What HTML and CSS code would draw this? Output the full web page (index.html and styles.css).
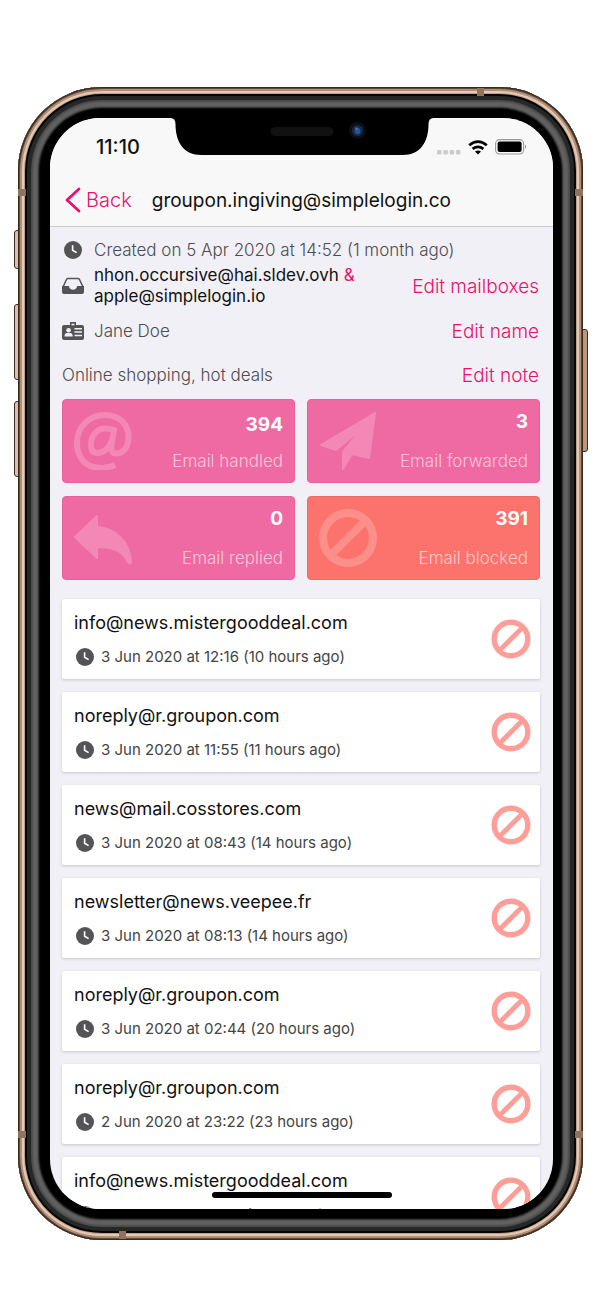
FILE: index.html
```html
<!DOCTYPE html>
<html lang="en">
<head>
<meta charset="utf-8">
<meta name="viewport" content="width=device-width, initial-scale=1">
<title>Alias activity</title>
<link rel="stylesheet" href="styles.css">
</head>
<body>
<svg class="sprite" aria-hidden="true">
  <symbol id="clock" viewBox="0 0 18 18"><circle cx="9" cy="9" r="9" fill="#545456"/><path d="M8.6 4.3V9.2L12.6 11.6" fill="none" stroke="#fff" stroke-width="1.6"/></symbol>
  <symbol id="ban" viewBox="0 0 40 40"><circle cx="20" cy="20" r="16.8" fill="none" stroke="currentColor" stroke-width="5.4"/><path d="M8.5 31.5L31.5 8.5" stroke="currentColor" stroke-width="4.8"/></symbol>
</svg>
<main class="phone">
  <span class="key key-mute"></span><span class="key key-up"></span><span class="key key-down"></span><span class="key key-power"></span>
  <span class="band band-tl"></span><span class="band band-tr"></span><span class="band band-bl"></span><span class="band band-br"></span><span class="band band-top"></span><span class="band band-bottom"></span>
  <div class="screen">
    <svg class="notch" viewBox="0 0 263 37" aria-hidden="true">
      <path d="M0 0Q5 0 5 6C5 24 13 37 31 37H232C250 37 258 24 258 6Q258 0 263 0Z" fill="#000"/>
      <rect x="100" y="9" width="63" height="9" rx="4.500" fill="#111"/>
      <circle cx="187" cy="12.500" r="8.500" fill="#0d0f12"/><circle cx="187" cy="12.500" r="5.500" fill="#17294a"/><circle cx="187" cy="13" r="3" fill="#2456a0"/><circle cx="186" cy="10.500" r="1.300" fill="#456fae"/>
    </svg>
    <header class="top">
      <div class="status">
        <time class="clock-time">11:10</time>
        <div class="signals">
          <svg width="24" height="6" viewBox="0 0 24 6" fill="#ccc" aria-hidden="true"><rect x="0" y="1" width="4.500" height="4.500" rx="1.200"/><rect x="6.300" y="1" width="4.500" height="4.500" rx="1.200"/><rect x="12.600" y="1" width="4.500" height="4.500" rx="1.200"/><rect x="18.900" y="1" width="4.500" height="4.500" rx="1.200"/></svg>
          <svg width="20" height="15" viewBox="0 0 20 15" fill="none" stroke="#000" stroke-width="2.700" aria-hidden="true"><path d="M1.200 5.200Q10 -1.900 18.800 5.200M4.600 8.900Q10 4.700 15.400 8.900"/><path d="M7 11.600Q10 9.400 13 11.600L10 14.600Z" fill="#000" stroke="none"/></svg>
          <svg width="32" height="16" viewBox="0 0 32 16" aria-hidden="true"><rect x=".6" y=".6" width="28" height="14.400" rx="4" fill="none" stroke="#999" stroke-width="1.100"/><rect x="2.600" y="2.600" width="24" height="10.400" rx="2" fill="#000"/><path d="M30 5.500Q32 7.800 30 10Z" fill="#888"/></svg>
        </div>
      </div>
      <nav class="nav">
        <button class="back" type="button"><svg width="16" height="26" viewBox="0 0 16 26" fill="none" stroke="currentColor" stroke-width="2.800" stroke-linecap="round" stroke-linejoin="round" aria-hidden="true"><path d="M14 2L2 13L14 24"/></svg>Back</button>
        <h1 class="title">groupon.ingiving@simplelogin.co</h1>
      </nav>
    </header>
    <section class="info">
      <div class="row row-created"><svg class="row-icon" viewBox="0 0 22 18" aria-hidden="true"><use href="#clock" x="2" width="18" height="18"/></svg><span>Created on 5 Apr 2020 at 14:52 (1 month ago)</span></div>
      <div class="row row-mail"><svg class="row-icon" viewBox="0 0 22 18" aria-hidden="true"><path d="M1 10L4.500 2.500Q5 1.500 6 1.500H16Q17 1.500 17.500 2.500L21 10" fill="none" stroke="#545456" stroke-width="1.500"/><path d="M0 9H7C7 14 15 14 15 9H22V15Q22 17 20 17H2Q0 17 0 15Z" fill="#545456"/></svg><span class="mailboxes">nhon.occursive@hai.sldev.ovh <span class="amp">&amp;</span><br>apple@simplelogin.io</span><button class="edit" type="button">Edit mailboxes</button></div>
      <div class="row row-name"><svg class="row-icon" viewBox="0 0 22 18" aria-hidden="true"><path d="M8 3V0H14V3H20Q22 3 22 5V16Q22 18 20 18H2Q0 18 0 16V5Q0 3 2 3Z" fill="#545456"/><path d="M9.500 1.700H12.500V3.300H9.500Z" fill="#f1f0f6"/><circle cx="6.600" cy="8.200" r="2.300" fill="#f1f0f6"/><path d="M2.500 14.500Q2.500 11 5 11H8.200Q10.700 11 10.700 14.500ZM12.500 6H20V7.500H12.500ZM12.500 9.300H20V10.800H12.500ZM12.500 12.800H20V14.300H12.500Z" fill="#f1f0f6"/></svg><span>Jane Doe</span><button class="edit" type="button">Edit name</button></div>
      <div class="row row-note"><span>Online shopping, hot deals</span><button class="edit" type="button">Edit note</button></div>
    </section>
    <section class="stats">
      <div class="stat stat-handled"><svg class="stat-icon" viewBox="0 0 58 58" fill="none" stroke="currentColor" stroke-width="6" aria-hidden="true"><path d="M41 53C37 55 33 56 28 56C12 56 3 46 3 31C3 15 15 3 31 3C45 3 54.500 12 54.500 25C54.500 35 49 41.500 43 41.500C38 41.500 36.500 38 37.500 33L40 18C37 17 34 16.500 31 16.500C22 16.500 17 25 17 33C17 38 19 41 23 41C30 41 36 35 37.500 29"/></svg><strong>394</strong><span>Email handled</span></div>
      <div class="stat"><svg class="stat-icon" viewBox="0 0 58 58" fill="currentColor" stroke="currentColor" stroke-width="2" stroke-linejoin="round" aria-hidden="true"><path d="M2 33L56 1L50 46L33 42L24 57V40L42 17L17 38Z"/></svg><strong>3</strong><span>Email forwarded</span></div>
      <div class="stat"><svg class="stat-icon" viewBox="0 0 58 58" fill="currentColor" stroke="currentColor" stroke-width="2" stroke-linejoin="round" aria-hidden="true"><path d="M1 28L23 7V18C42 19 56 33 57 53Q56 56 54 53C48 41 39 38 23 38V49Z"/></svg><strong>0</strong><span>Email replied</span></div>
      <div class="stat stat-blocked"><svg class="stat-icon" viewBox="0 0 58 58" fill="none" stroke="currentColor" aria-hidden="true"><circle cx="29" cy="29" r="25" stroke-width="8"/><path d="M12 46L46 12" stroke-width="8"/></svg><strong>391</strong><span>Email blocked</span></div>
    </section>
    <ul class="list">
      <li class="card"><div><h2>info@news.mistergooddeal.com</h2><p><svg width="18" height="18" aria-hidden="true"><use href="#clock"/></svg>3 Jun 2020 at 12:16 (10 hours ago)</p></div><button class="block" type="button" aria-label="Block"><svg width="40" height="40"><use href="#ban"/></svg></button></li>
      <li class="card"><div><h2>noreply@r.groupon.com</h2><p><svg width="18" height="18" aria-hidden="true"><use href="#clock"/></svg>3 Jun 2020 at 11:55 (11 hours ago)</p></div><button class="block" type="button" aria-label="Block"><svg width="40" height="40"><use href="#ban"/></svg></button></li>
      <li class="card"><div><h2>news@mail.cosstores.com</h2><p><svg width="18" height="18" aria-hidden="true"><use href="#clock"/></svg>3 Jun 2020 at 08:43 (14 hours ago)</p></div><button class="block" type="button" aria-label="Block"><svg width="40" height="40"><use href="#ban"/></svg></button></li>
      <li class="card"><div><h2>newsletter@news.veepee.fr</h2><p><svg width="18" height="18" aria-hidden="true"><use href="#clock"/></svg>3 Jun 2020 at 08:13 (14 hours ago)</p></div><button class="block" type="button" aria-label="Block"><svg width="40" height="40"><use href="#ban"/></svg></button></li>
      <li class="card"><div><h2>noreply@r.groupon.com</h2><p><svg width="18" height="18" aria-hidden="true"><use href="#clock"/></svg>3 Jun 2020 at 02:44 (20 hours ago)</p></div><button class="block" type="button" aria-label="Block"><svg width="40" height="40"><use href="#ban"/></svg></button></li>
      <li class="card"><div><h2>noreply@r.groupon.com</h2><p><svg width="18" height="18" aria-hidden="true"><use href="#clock"/></svg>2 Jun 2020 at 23:22 (23 hours ago)</p></div><button class="block" type="button" aria-label="Block"><svg width="40" height="40"><use href="#ban"/></svg></button></li>
      <li class="card"><div><h2>info@news.mistergooddeal.com</h2><p><svg width="18" height="18" aria-hidden="true"><use href="#clock"/></svg>2 Jun 2020 at 18:32 (1 day ago)</p></div><button class="block" type="button" aria-label="Block"><svg width="40" height="40"><use href="#ban"/></svg></button></li>
    </ul>
    <span class="home"></span>
  </div>
</main>
</body>
</html>
```
FILE: styles.css
```css
* { box-sizing: border-box; }

body {
  margin: 0;
  padding: 87px 17px 58px 18px;
  background: #fff;
  color: #111;
  font-family: Inter, "Liberation Sans", sans-serif;
}

h1, h2, p, ul { margin: 0; padding: 0; font-weight: 400; }
button { border: 0; padding: 0; background: none; color: inherit; font: inherit; }
svg { display: block; flex: none; }
.sprite { position: absolute; width: 0; height: 0; }

/* Device body: rings run from the metal rim inwards to the black bezel. */
.phone {
  position: relative;
  padding: 31px 30px 31px 32px;
  border-radius: 84px;
  background: #000;
  box-shadow:
    inset 0 0 0 1px #3a2a22,
    inset 0 0 0 2px #5c4638,
    inset 0 0 0 4px #b08f76,
    inset 0 0 0 6px #e6c9b2,
    inset 0 0 0 7px #b9a08e,
    inset 0 0 0 9px #050505,
    inset 0 0 0 13px #262727,
    inset 0 0 2px 15px #4a4a4a,
    inset 0 0 2px 20px #626262,
    inset 0 0 2px 21px #333;
}

.key {
  position: absolute;
  z-index: -1;
  left: -4px;
  width: 8px;
  border: 1px solid #3b2c24;
  border-radius: 3px;
  background: #dcc0aa;
}
.key-mute { top: 143px; height: 39px; }
.key-up { top: 217px; height: 76px; }
.key-down { top: 314px; height: 76px; }
.key-power { top: 242px; right: -5px; left: auto; height: 123px; background: #b8977c; }

.band { position: absolute; width: 8px; height: 7px; background: #90735f; }
.band-tl { top: 102px; left: 0; }
.band-tr { top: 102px; right: 0; }
.band-bl { bottom: 102px; left: 0; }
.band-br { bottom: 102px; right: 0; }
.band-top { top: 1px; right: 99px; width: 7px; height: 8px; }
.band-bottom { bottom: 1px; left: 101px; width: 7px; height: 8px; }

.screen {
  position: relative;
  aspect-ratio: 503 / 1091;
  overflow: hidden;
  border-radius: 50px;
  background: #f1f0f6;
}

.notch { position: absolute; top: 0; left: 50%; width: 263px; height: 37px; transform: translateX(-50%); }

.top { border-bottom: 1px solid #cbcbcf; background: #f8f8f8; }
.status { display: flex; align-items: center; justify-content: space-between; height: 56px; padding: 2px 26px 0 46px; }
.clock-time { font-size: 20px; font-weight: 500; }
.signals { display: flex; align-items: center; gap: 7px; }
.signals svg:first-child { align-self: flex-end; }
.nav { display: flex; align-items: center; gap: 20px; height: 52px; padding: 0 15px; }
.back { display: flex; align-items: center; gap: 5px; color: #e8116e; font-size: 20px; font-weight: 300; }
.title { font-size: 19px; white-space: nowrap; }

.info { padding: 11px 14px 0 12px; color: #4c4c4f; font-size: 17px; font-weight: 300; }
.row { display: flex; align-items: center; gap: 10px; }
.row-icon { width: 22px; height: 18px; }
.row-created { height: 23px; }
.row-mail { height: 50px; line-height: 21px; }
.row-name { height: 40px; }
.row-note { height: 48px; }
.mailboxes { flex: 1; color: #111; font-weight: 400; white-space: nowrap; }
.amp, .edit { color: #e8116e; }
.edit { margin-left: auto; font-size: 19px; white-space: nowrap; }

.stats { display: grid; grid-template-columns: 1fr 1fr; gap: 13px 12px; padding: 0 13px 0 12px; }
.stat {
  display: grid;
  grid-template-columns: auto 1fr;
  grid-template-rows: auto 1fr;
  padding: 12px 11px;
  border: 1px solid #e9619b;
  border-radius: 4px;
  background: #ef6aa2;
  color: #fff;
  text-align: right;
}
.stat-icon { grid-row: 1 / 3; width: 58px; height: 58px; color: #f388b6; }
.stat strong { font-size: 19px; line-height: 20px; }
.stat span { align-self: end; color: #fac6dc; font-size: 17px; font-weight: 300; line-height: 18px; }
.stat-handled strong { padding-top: 3px; }
.stat-blocked { border-color: #f26a65; background: #fc736d; }
.stat-blocked .stat-icon { color: #fd8f8a; }
.stat-blocked span { color: #fecac7; }

.list { display: grid; gap: 13px; padding: 19px 13px 0 12px; list-style: none; }
.card {
  display: flex;
  align-items: center;
  justify-content: space-between;
  height: 80px;
  padding: 0 9px 0 12px;
  border-radius: 2px;
  background: #fff;
  box-shadow: 0 1px 3px #c4c4c8;
}
.card h2 { font-size: 18px; line-height: 24px; }
.card p { display: flex; align-items: center; gap: 7px; margin-top: 11px; padding-left: 2px; color: #444; font-size: 15px; line-height: 22px; }
.block { color: #ff9d98; }

.home { position: absolute; bottom: 11px; left: 50%; width: 180px; height: 6px; border-radius: 3px; background: #000; transform: translateX(-50%); }
```
